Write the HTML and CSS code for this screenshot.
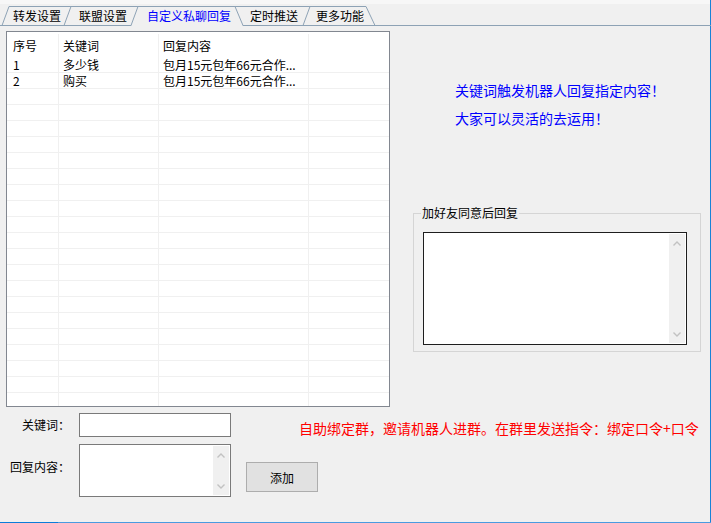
FILE: index.html
```html
<!DOCTYPE html>
<html lang="zh-CN">
<head>
    <meta charset="UTF-8">
    <title>自定义私聊回复</title>
    <link rel="stylesheet" href="styles.css">
</head>
<body>
    <div class="window">
        <div class="tabs">
            <svg class="tab-lines" width="711" height="26" viewBox="0 0 711 26">
                <line x1="0" y1="25.5" x2="711" y2="25.5"/>
                <polygon points="2,25.5 9,6.5 73,6.5 80,25.5"/>
                <polygon points="64,25.5 71,6.5 140,6.5 147,25.5"/>
                <polygon points="225,25.5 232,6.5 312,6.5 320,25.5"/>
                <polygon points="303,25.5 310,6.5 366,6.5 375,25.5"/>
                <polygon class="sel-fill" points="131,26 138,6.5 235,6.5 243,26"/>
                <polyline points="131,25.5 138,6.5 235,6.5 243,25.5"/>
            </svg>
            <span class="tab">转发设置</span>
            <span class="tab">联盟设置</span>
            <span class="tab active">自定义私聊回复</span>
            <span class="tab">定时推送</span>
            <span class="tab">更多功能</span>
        </div>

        <div class="main">
            <div class="list">
                <div class="row head"><span>序号</span><span>关键词</span><span>回复内容</span><span></span></div>
                <div class="row"><span>1</span><span>多少钱</span><span>包月15元包年66元合作...</span><span></span></div>
                <div class="row"><span>2</span><span>购买</span><span>包月15元包年66元合作...</span><span></span></div>
                <div class="row"><span></span><span></span><span></span><span></span></div>
                <div class="row"><span></span><span></span><span></span><span></span></div>
                <div class="row"><span></span><span></span><span></span><span></span></div>
                <div class="row"><span></span><span></span><span></span><span></span></div>
                <div class="row"><span></span><span></span><span></span><span></span></div>
                <div class="row"><span></span><span></span><span></span><span></span></div>
                <div class="row"><span></span><span></span><span></span><span></span></div>
                <div class="row"><span></span><span></span><span></span><span></span></div>
                <div class="row"><span></span><span></span><span></span><span></span></div>
                <div class="row"><span></span><span></span><span></span><span></span></div>
                <div class="row"><span></span><span></span><span></span><span></span></div>
                <div class="row"><span></span><span></span><span></span><span></span></div>
                <div class="row"><span></span><span></span><span></span><span></span></div>
                <div class="row"><span></span><span></span><span></span><span></span></div>
                <div class="row"><span></span><span></span><span></span><span></span></div>
                <div class="row"><span></span><span></span><span></span><span></span></div>
                <div class="row"><span></span><span></span><span></span><span></span></div>
                <div class="row"><span></span><span></span><span></span><span></span></div>
                <div class="row"><span></span><span></span><span></span><span></span></div>
                <div class="row"><span></span><span></span><span></span><span></span></div>
            </div>

            <div class="side">
                <p class="notes">关键词触发机器人回复指定内容！<br>大家可以灵活的去运用！</p>
                <fieldset class="group">
                    <legend>加好友同意后回复</legend>
                    <div class="memo big">
                        <div class="scroll">
                            <svg width="8" height="5" viewBox="0 0 8 5"><polyline points="0.5,4.5 4,1 7.5,4.5"/></svg>
                            <svg width="8" height="5" viewBox="0 0 8 5"><polyline points="0.5,0.5 4,4 7.5,0.5"/></svg>
                        </div>
                    </div>
                </fieldset>
            </div>
        </div>

        <div class="form">
            <label class="lbl">关键词：</label>
            <div class="input"></div>
            <p class="tip">自助绑定群，邀请机器人进群。在群里发送指令：绑定口令+口令</p>
            <label class="lbl two">回复内容：</label>
            <div class="memo small">
                <div class="scroll">
                    <svg width="8" height="5" viewBox="0 0 8 5"><polyline points="0.5,4.5 4,1 7.5,4.5"/></svg>
                    <svg width="8" height="5" viewBox="0 0 8 5"><polyline points="0.5,0.5 4,4 7.5,0.5"/></svg>
                </div>
            </div>
            <button class="btn">添加</button>
        </div>
    </div>
    <div class="taskbar"></div>
</body>
</html>
```

FILE: styles.css
```css
body {
    margin: 0;
    background-color: #f0f0f0;
    font-family: "Noto Sans CJK SC", "Noto Sans", sans-serif;
    font-size: 12px;
    color: #000;
}
.window {
    width: 710px;
    height: 522px;
    border-right: 1px solid #1883d7;
}
.taskbar {
    width: 711px;
    height: 1px;
    background: linear-gradient(to right, #0b7dd9 0 58px, #4a9be0 58px);
}

/* tabs */
.tabs {
    position: relative;
    height: 26px;
    display: flex;
    padding-left: 4px;
    box-sizing: border-box;
    background: linear-gradient(#f7f7f7 0 4px, #f0f0f0 4px);
}
.tab-lines {
    position: absolute;
    left: 0;
    top: 0;
}
.tab-lines line,
.tab-lines polygon,
.tab-lines polyline {
    fill: #f0f0f0;
    stroke: #8da2b5;
    stroke-width: 1;
}
.tab-lines polyline {
    fill: none;
}
.tab-lines .sel-fill {
    stroke: none;
}
.tab {
    position: relative;
    padding: 9px 9px 0;
    line-height: 14px;
    white-space: nowrap;
}
.tab.active {
    color: #0000ff;
    padding: 9px 10px 0 11px;
}

/* list */
.main {
    display: flex;
}
.list {
    margin: 5px 0 0 6px;
    width: 384px;
    height: 376px;
    box-sizing: border-box;
    border: 1px solid #828790;
    background-color: #fff;
    overflow: hidden;
}
.row {
    display: grid;
    grid-template-columns: 52px 100px 150px 1fr;
    height: 16px;
    box-sizing: border-box;
    border-bottom: 1px solid #f0f0f0;
    line-height: 15px;
}
.row span {
    border-right: 1px solid #f0f0f0;
    padding-left: 4px;
    white-space: nowrap;
    overflow: hidden;
}
.row span:first-child {
    padding-left: 6px;
}
.row span:last-child {
    border-right: none;
}
.row.head {
    height: 25px;
    padding-top: 2px;
    line-height: 23px;
    border-bottom: none;
}

/* right side */
.side {
    flex: 1;
    padding-left: 23px;
}
.notes {
    margin: 50px 0 0 42px;
    color: #0000ff;
    font-size: 14px;
    line-height: 28px;
}
.group {
    margin: 74px 0 0 0;
    width: 288px;
    box-sizing: border-box;
    padding: 0 0 6px 0;
    border: 1px solid #d5d5d5;
}
.group legend {
    margin-left: 7px;
    padding: 0 1px;
    line-height: 14px;
}
.memo {
    display: flex;
    justify-content: flex-end;
    padding: 1px;
    box-sizing: border-box;
    background-color: #fff;
    border: 1px solid #7a7a7a;
}
.memo.big {
    margin: 12px 0 0 9px;
    width: 264px;
    height: 113px;
    border-color: #1e1e1e;
}
.scroll {
    width: 16px;
    background-color: #f0f0f0;
    display: flex;
    flex-direction: column;
    justify-content: space-between;
    align-items: center;
    padding: 7px 0 6px;
    box-sizing: border-box;
}
.scroll svg polyline {
    fill: none;
    stroke: #c2c2c2;
    stroke-width: 1.4;
}

/* form */
.form {
    display: grid;
    grid-template-columns: 70px 152px 1fr;
    grid-template-rows: 24px 53px;
    column-gap: 9px;
    row-gap: 7px;
    margin-top: 6px;
}
.lbl {
    text-align: right;
    line-height: 14px;
    align-self: center;
}
.lbl.two {
    align-self: start;
    padding-top: 16px;
}
.input {
    background-color: #fff;
    border: 1px solid #7a7a7a;
    box-sizing: border-box;
}
.memo.small {
    height: 53px;
}
.tip {
    margin: 8px 0 0;
    padding-left: 59px;
    align-self: start;
    color: #ff0000;
    font-size: 14px;
    line-height: 14px;
    white-space: nowrap;
}
.btn {
    justify-self: start;
    align-self: start;
    margin: 18px 0 0 6px;
    width: 72px;
    height: 30px;
    padding: 0;
    background-color: #e1e1e1;
    border: 1px solid #adadad;
    font-family: "Noto Sans CJK SC", sans-serif;
    font-size: 12px;
    color: #000;
}
```
